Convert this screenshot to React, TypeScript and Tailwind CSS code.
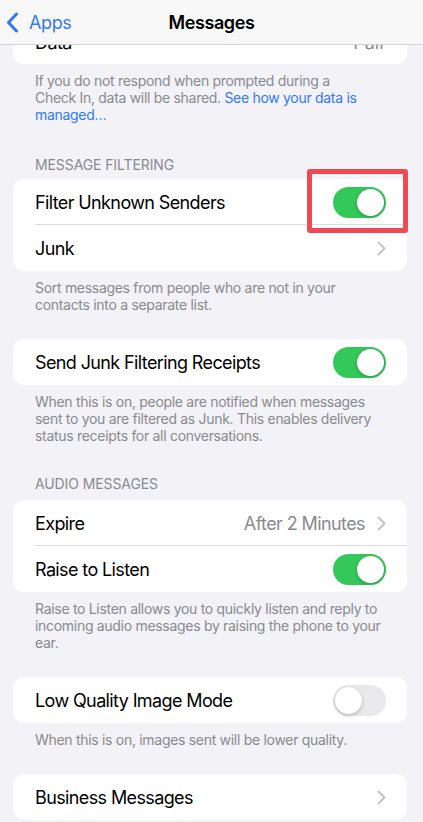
import type { ReactNode } from "react";

const font = { fontFamily: "Inter, 'Noto Sans', sans-serif" };

function Chevron() {
  return (
    <svg width="9" height="15" viewBox="0 0 9 15" fill="none">
      <path d="M1.5 1.5L7.5 7.5L1.5 13.5" stroke="#c4c4c7" strokeWidth="2" strokeLinecap="round" strokeLinejoin="round" />
    </svg>
  );
}

function Toggle({ on }: { on: boolean }) {
  return (
    <div
      className={`w-[53px] h-[31px] rounded-full p-[2px] flex items-center ${
        on ? "bg-[#34c759] justify-end" : "bg-[#e9e9eb] justify-start"
      }`}
    >
      <div className="w-[27px] h-[27px] rounded-full bg-white shadow-[0_2px_4px_rgba(0,0,0,0.18),0_0_1px_rgba(0,0,0,0.15)]" />
    </div>
  );
}

function Row({ label, right, divider }: { label: string; right?: ReactNode; divider?: boolean }) {
  return (
    <div className="relative h-[46px] flex items-center justify-between pl-[22px] pr-[21px]">
      <span className="text-[18px] tracking-[-0.62px] text-black">{label}</span>
      {right}
      {divider && <div className="absolute bottom-0 left-[22px] right-0 h-px bg-[#dcdcdf]" />}
    </div>
  );
}

function Card({ children }: { children: ReactNode }) {
  return <div className="bg-white rounded-[11px] overflow-hidden">{children}</div>;
}

function Footer({ children }: { children: ReactNode }) {
  return (
    <p className="px-[22px] pt-[8px] text-[14px] leading-[17px] tracking-[-0.3px] text-[#8a8a8e]">{children}</p>
  );
}

function SectionTitle({ children }: { children: ReactNode }) {
  return (
    <div className="px-[22px] text-[14px] leading-[17px] tracking-[-0.1px] text-[#8a8a8e] uppercase">{children}</div>
  );
}

export default function App() {
  return (
    <div style={font} className="relative w-[423px] h-[822px] overflow-hidden bg-[#f2f2f7]">
      <div className="absolute top-0 left-0 right-0 z-10 h-[45px] bg-[#f8f8f8] border-b border-[#d4d4d6] flex items-center">
        <div className="flex items-center pl-[6px] gap-[10px] text-[#3478f6]">
          <svg width="13" height="21" viewBox="0 0 13 21" fill="none">
            <path d="M10.5 2L2.5 10.5L10.5 19" stroke="#3478f6" strokeWidth="3" strokeLinecap="round" strokeLinejoin="round" />
          </svg>
          <span className="text-[18px] tracking-[-0.4px]">Apps</span>
        </div>
        <div className="absolute left-0 right-0 text-center text-[18px] font-semibold tracking-[-0.4px] text-black pointer-events-none">
          Messages
        </div>
      </div>

      <div className="pl-[13px] pr-[16px] pt-[20px]">
        <Card>
          <div className="h-[44px] flex items-center justify-between pl-[22px] pr-[21px]">
            <span className="text-[18px] tracking-[-0.6px]">Data</span>
            <span className="text-[18px] text-[#8a8a8e]">Pair</span>
          </div>
        </Card>
        <Footer>
          If you do not respond when prompted during a Check{"\u00A0"}In, data will be shared.{" "}
          <span className="text-[#3478f6]">See how your data is managed…</span>
        </Footer>

        <div className="mt-[33px]">
          <SectionTitle>Message Filtering</SectionTitle>
        </div>
        <div className="relative mt-[6px]">
          <Card>
            <Row label="Filter Unknown Senders" right={<Toggle on />} divider />
            <Row label="Junk" right={<Chevron />} />
          </Card>
          <div className="absolute left-[294px] top-[-10px] w-[101px] h-[64px] border-[5px] border-[#ee4a52] rounded-[3px]" />
        </div>
        <Footer>Sort messages from people who are not in your contacts into a separate list.</Footer>

        <div className="mt-[26px]">
          <Card>
            <Row label="Send Junk Filtering Receipts" right={<Toggle on />} />
          </Card>
        </div>
        <Footer>
          When this is on, people are notified when messages sent to you are filtered as Junk. This enables delivery
          status receipts for all conversations.
        </Footer>

        <div className="mt-[31px]">
          <SectionTitle>Audio Messages</SectionTitle>
        </div>
        <div className="mt-[8px]">
          <Card>
            <Row
              label="Expire"
              divider
              right={
                <div className="flex items-center gap-[12px]">
                  <span className="text-[18px] tracking-[-0.6px] text-[#8a8a8e]">After 2 Minutes</span>
                  <Chevron />
                </div>
              }
            />
            <Row label="Raise to Listen" right={<Toggle on />} />
          </Card>
        </div>
        <Footer>
          Raise to Listen allows you to quickly listen and reply to incoming audio messages by raising the phone to your
          ear.
        </Footer>

        <div className="mt-[26px]">
          <Card>
            <Row label="Low Quality Image Mode" right={<Toggle on={false} />} />
          </Card>
        </div>
        <Footer>When this is on, images sent will be lower quality.</Footer>

        <div className="mt-[26px]">
          <Card>
            <Row label="Business Messages" right={<Chevron />} />
          </Card>
        </div>
      </div>
    </div>
  );
}
